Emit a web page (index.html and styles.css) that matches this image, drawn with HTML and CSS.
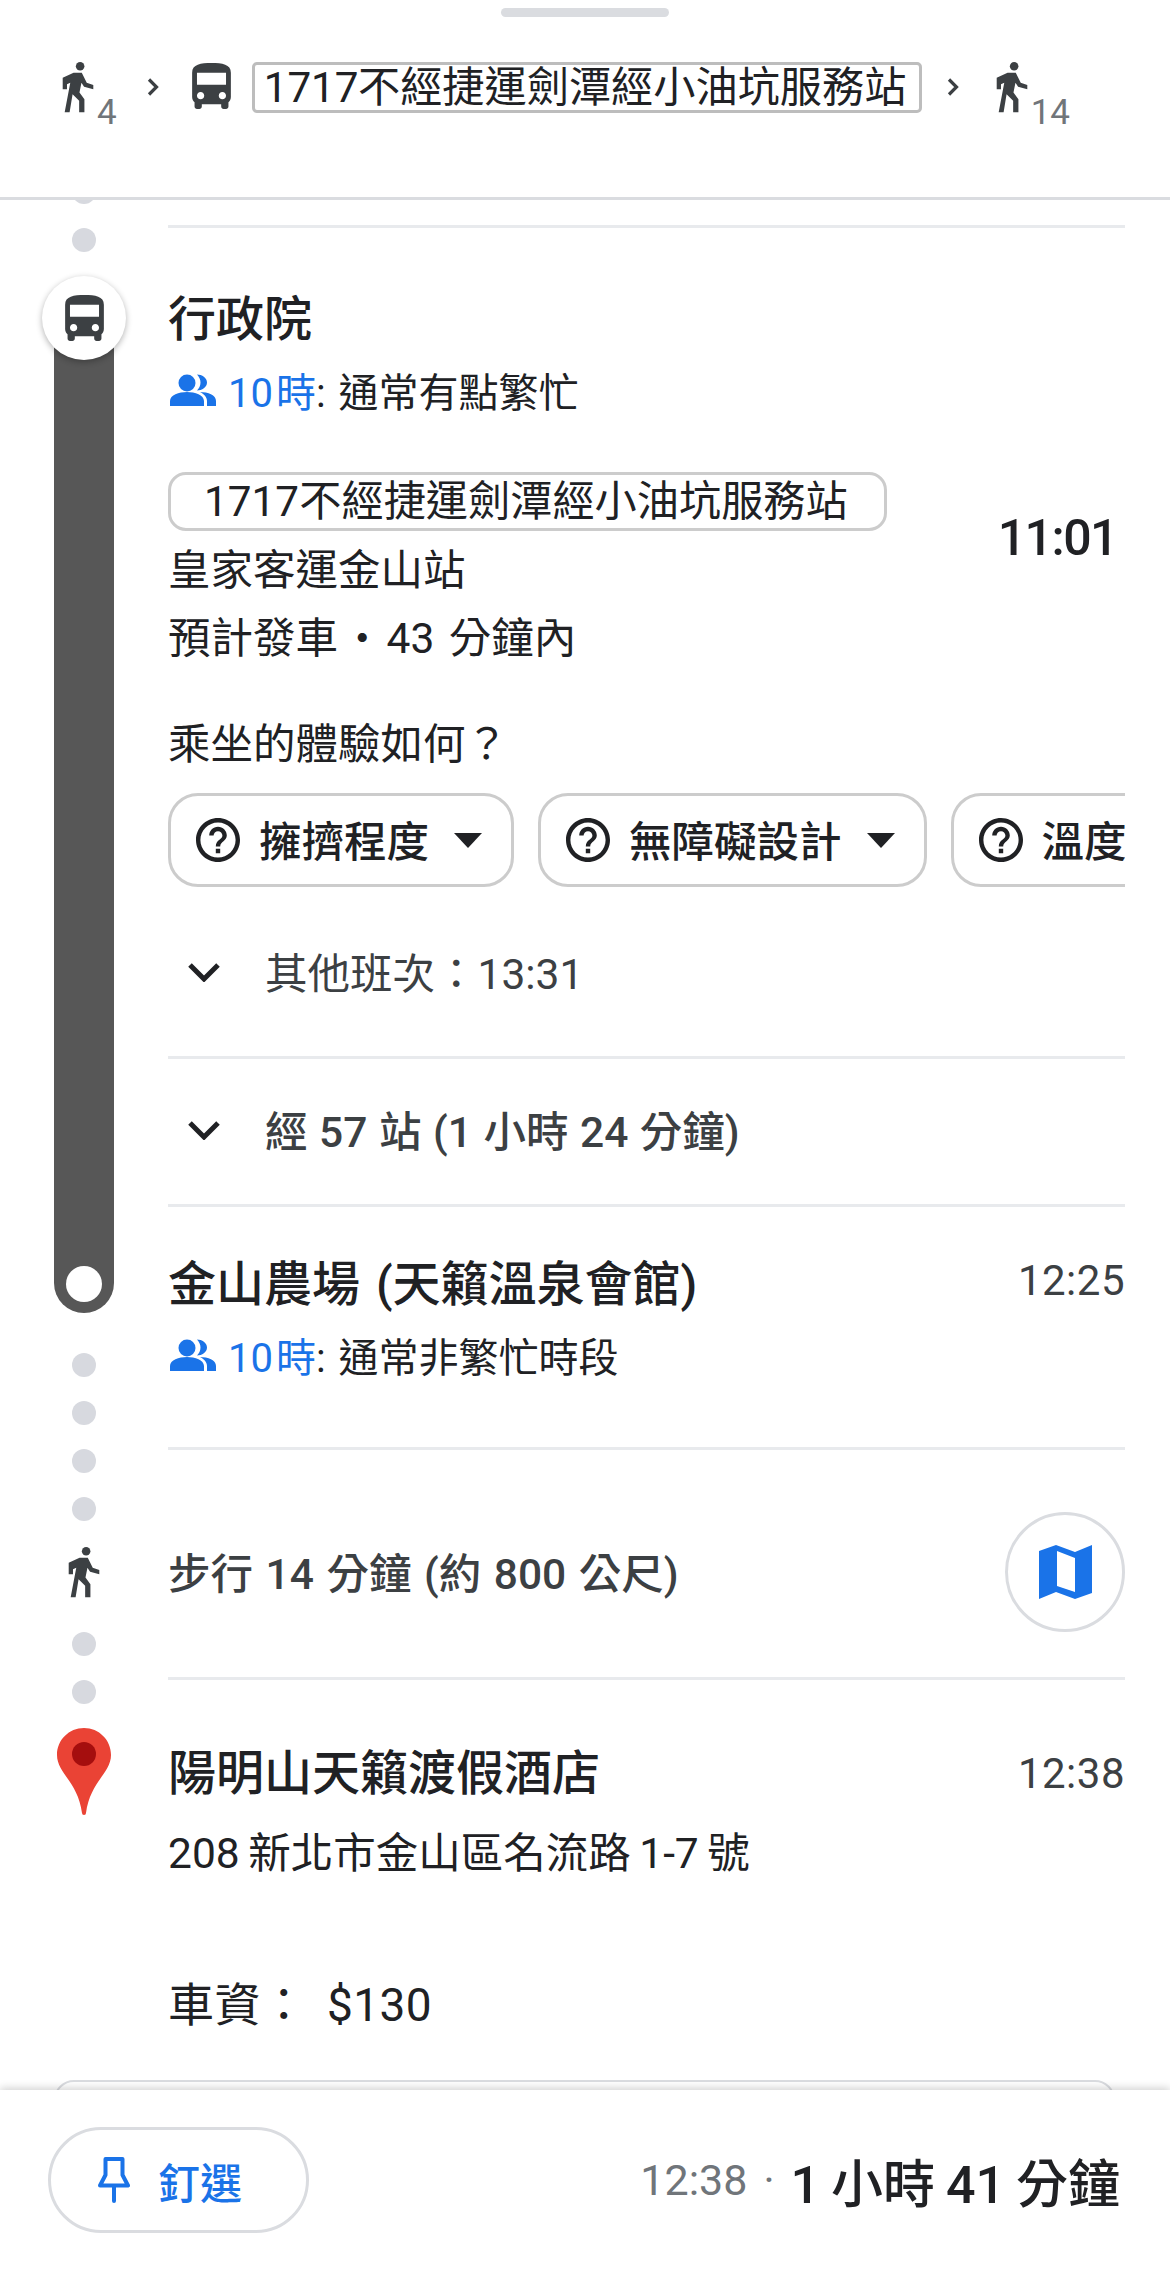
FILE: index.html
```html
<!doctype html>
<html lang="zh-Hant">
  <head>
    <meta charset="utf-8">
    <meta name="viewport" content="width=device-width, user-scalable=no">
    <title>路線詳情</title>
    <link rel="stylesheet" href="styles.css">
  </head>
  <body>
    <svg class="sprites" xmlns="http://www.w3.org/2000/svg">
      <symbol id="walk" viewBox="65 37 97 155"><circle cx="120" cy="50" r="13"/><path d="M67 85L100 70h25l15 30 20 7v13l-28-8-8-12-6 30 15 20v40h-16v-35l-20-20-9 55H73l17-90-10 5v15H67z"/></symbol>
      <symbol id="bus" viewBox="4 2 16 19"><path d="M4 16c0 .88.39 1.67 1 2.22V20c0 .55.45 1 1 1h1c.55 0 1-.45 1-1v-1h8v1c0 .55.45 1 1 1h1c.55 0 1-.45 1-1v-1.78c.61-.55 1-1.34 1-2.22V6c0-3.5-3.58-4-8-4s-8 .5-8 4v10zm3.5 1c-.83 0-1.5-.67-1.5-1.5S6.67 14 7.5 14s1.5.67 1.5 1.5S8.33 17 7.5 17zm9 0c-.83 0-1.5-.67-1.5-1.5s.67-1.5 1.5-1.5 1.5.67 1.5 1.5-.67 1.5-1.5 1.5zm1.5-6H6V6h12v5z"/></symbol>
      <symbol id="people" viewBox="0 0 46 32"><circle cx="17" cy="9" r="8.5"/><path d="M0 32v-5c0-6 9-9 17-9s17 3 17 9v5zM27 .5c5 0 10 3.5 10 8s-5 8-10 8c2-2 3.5-5 3.5-8s-1.5-6-3.5-8zM30 18c8 0 16 3 16 9v5h-9v-5c0-4-3-7-7-9z"/></symbol>
      <symbol id="help" viewBox="2 2 20 20"><path d="M11 18h2v-2h-2v2zm1-16C6.48 2 2 6.48 2 12s4.48 10 10 10 10-4.48 10-10S17.52 2 12 2zm0 18c-4.41 0-8-3.59-8-8s3.59-8 8-8 8 3.59 8 8-3.59 8-8 8zm0-14c-2.21 0-4 1.79-4 4h2c0-1.1.9-2 2-2s2 .9 2 2c0 2-3 1.75-3 5h2c0-2.25 3-2.5 3-5 0-2.21-1.79-4-4-4z"/></symbol>
      <symbol id="chevron-right" viewBox="0 0 13 20"><path d="M3 2.5l7.5 7.5L3 17.500" fill="none" stroke="currentColor" stroke-width="3.2"/></symbol>
      <symbol id="chevron-down" viewBox="0 0 32 20"><path d="M2 3l14 14L30 3" fill="none" stroke="currentColor" stroke-width="5"/></symbol>
    </svg>

    <header class="topbar">
      <div class="handle"></div>
      <div class="steps">
        <svg class="icon walk"><use href="#walk"/></svg>
        <span class="mins">4</span>
        <svg class="chev"><use href="#chevron-right"/></svg>
        <svg class="icon bus"><use href="#bus"/></svg>
        <span class="linebox">1717 不經捷運劍潭經小油坑服務站</span>
        <svg class="chev chev2"><use href="#chevron-right"/></svg>
        <svg class="icon walk walk2"><use href="#walk"/></svg>
        <span class="mins">14</span>
      </div>
    </header>

    <main class="scroll">
      <div class="timeline">
        <div class="rail">
          <div class="dot first"></div>
          <div class="dot"></div>
          <div class="badge"><svg class="icon bus"><use href="#bus"/></svg></div>
          <div class="bar"><div class="barend"></div></div>
          <div class="dot afterbar"></div>
          <div class="dot"></div>
          <div class="dot"></div>
          <div class="dot"></div>
          <svg class="icon railwalk"><use href="#walk"/></svg>
          <div class="dot afterwalk"></div>
          <div class="dot"></div>
          <svg class="destpin" viewBox="0 0 54 87">
            <path d="M27 0C12 0 0 12 0 27c0 18 21 27 25 58a2 2 0 0 0 4 0c4-31 25-40 25-58C54 12 42 0 27 0z" fill="#ea4335"/>
            <ellipse cx="27" cy="26" rx="12" ry="12" fill="#a50e0e"/>
          </svg>
        </div>

        <div class="content">
          <hr class="line firstline">

          <div class="stop">
            <h2 class="name">行政院</h2>
          </div>
          <div class="crowd">
            <svg class="people"><use href="#people"/></svg>
            <span class="hour">10 時</span><span class="crowdtext">: 通常有點繁忙</span>
          </div>

          <div class="depart">
            <div class="departinfo">
              <div class="routechip">1717 不經捷運劍潭經小油坑服務站</div>
              <div class="textline">皇家客運金山站</div>
              <div class="textline eta">預計發車<span class="etadot">・</span>43 分鐘內</div>
            </div>
            <div class="departtime">11:01</div>
          </div>

          <div class="question">乘坐的體驗如何？</div>
          <div class="chips">
            <div class="chip"><svg class="help"><use href="#help"/></svg><span>擁擠程度</span><i class="caret"></i></div>
            <div class="chip"><svg class="help"><use href="#help"/></svg><span>無障礙設計</span><i class="caret"></i></div>
            <div class="chip"><svg class="help"><use href="#help"/></svg><span>溫度</span><i class="caret"></i></div>
          </div>

          <div class="expand other">
            <svg class="down"><use href="#chevron-down"/></svg>
            <span>其他班次：13:31</span>
          </div>
          <hr class="line">
          <div class="expand stops">
            <svg class="down"><use href="#chevron-down"/></svg>
            <span>經 57 站 (1 小時 24 分鐘)</span>
          </div>
          <hr class="line">

          <div class="stop second">
            <h2 class="name">金山農場 (天籟溫泉會館)</h2>
            <span class="clock">12:25</span>
          </div>
          <div class="crowd">
            <svg class="people"><use href="#people"/></svg>
            <span class="hour">10 時</span><span class="crowdtext">: 通常非繁忙時段</span>
          </div>
          <hr class="line beforewalk">

          <div class="walkrow">
            <span class="walktext">步行 14 分鐘 (約 800 公尺)</span>
            <div class="mapbtn">
              <svg class="mapicon" viewBox="0 0 53 54"><path fill-rule="evenodd" d="M0 6L17 0l19 7L53 0v48l-17 6-19-7-17 7zM18 6v35l18 6V13z"/></svg>
            </div>
          </div>
          <hr class="line">

          <div class="stop third">
            <h2 class="name">陽明山天籟渡假酒店</h2>
            <span class="clock">12:38</span>
          </div>
          <div class="textline address">208 新北市金山區名流路 1-7 號</div>
          <div class="fare">車資： $130</div>
        </div>
      </div>
      <div class="nextcard"></div>
    </main>

    <footer class="bottombar">
      <div class="pinbtn">
        <svg class="pin" viewBox="0 0 32 46"><path d="M7.500 2h17v16l5.500 10.500H2L7.500 18zM16 29v15"/></svg>
        <span>釘選</span>
      </div>
      <div class="summary">
        <span class="arrive">12:38</span>
        <span class="sep">·</span>
        <span class="total">1 小時 41 分鐘</span>
      </div>
    </footer>
  </body>
</html>
```

FILE: styles.css
```css
* {
  box-sizing: border-box;
}

body {
  margin: 0;
  width: 1170px;
  height: 2270px;
  overflow: hidden;
  display: flex;
  flex-direction: column;
  background: #fff;
  color: #202124;
  font-family: Roboto, "Noto Sans CJK TC", sans-serif;
  font-size: 42.5px;
}

.sprites {
  display: none;
}

.icon {
  display: block;
  fill: #3c4043;
  flex: none;
}

/* top bar */
.topbar {
  flex: none;
  height: 200px;
  border-bottom: 3px solid #dadce0;
  background: #fff;
  position: relative;
  z-index: 2;
  padding-top: 8px;
}

.handle {
  width: 168px;
  height: 9px;
  margin: 0 auto;
  border-radius: 5px;
  background: #dadce0;
}

.steps {
  display: flex;
  align-items: flex-start;
  margin-top: 45px;
  padding-left: 62px;
}

.walk {
  width: 32px;
  height: 51px;
}

.mins {
  font-size: 35px;
  line-height: 36px;
  color: #70757a;
  margin-top: 33px;
  margin-left: 3px;
}

.chev {
  width: 13px;
  height: 20px;
  margin-top: 15px;
  margin-left: 29px;
  color: #3c4043;
}

.chev2 {
  margin-left: 24px;
}

.bus {
  width: 39px;
  height: 46px;
}

.steps .bus {
  margin-left: 33px;
  margin-top: 1px;
}

.linebox {
  width: 670px;
  height: 51px;
  margin-left: 21px;
  border: 3px solid #bdbdbd;
  border-radius: 5px;
  font-size: 42.2px;
  line-height: 46px;
  padding-left: 9px;
  word-spacing: -11px;
  white-space: nowrap;
}

.walk2 {
  margin-left: 37px;
}

/* scrolling part */
.scroll {
  flex: 1;
  overflow: hidden;
  min-height: 0;
}

.timeline {
  display: flex;
}

.rail {
  flex: none;
  width: 168px;
  display: flex;
  flex-direction: column;
  align-items: center;
}

.dot {
  flex: none;
  width: 24px;
  height: 24px;
  border-radius: 50%;
  background: #d7d9df;
  margin-top: 24px;
}

.dot.first {
  margin-top: -20px;
}

.dot.afterbar {
  margin-top: 40px;
}

.dot.afterwalk {
  margin-top: 34px;
}

.badge {
  flex: none;
  position: relative;
  z-index: 1;
  width: 84px;
  height: 84px;
  margin-top: 24px;
  border-radius: 50%;
  background: #fff;
  box-shadow: 0 2px 6px rgba(0, 0, 0, .3);
  display: flex;
  align-items: center;
  justify-content: center;
}

.bar {
  flex: none;
  width: 60px;
  height: 995px;
  margin-top: -42px;
  border-radius: 0 0 30px 30px;
  background: #575757;
  display: flex;
  flex-direction: column;
  justify-content: flex-end;
  align-items: center;
  padding-bottom: 11px;
}

.barend {
  width: 36px;
  height: 36px;
  border-radius: 50%;
  background: #fff;
}

.railwalk {
  width: 32px;
  height: 51px;
  margin-top: 26px;
}

.destpin {
  flex: none;
  width: 54px;
  height: 87px;
  margin-top: 24px;
}

.content {
  flex: none;
  width: 957px;
  display: flex;
  flex-direction: column;
}

.line {
  flex: none;
  width: 100%;
  height: 3px;
  margin: 0;
  border: 0;
  background: #e8eaed;
}

.firstline {
  margin-top: 25px;
}

.stop {
  display: flex;
  justify-content: space-between;
  align-items: center;
  margin-top: 62px;
  height: 60px;
}

.stop.second {
  margin-top: 48px;
}

.stop.second .name {
  word-spacing: 4px;
}

.stop.second .clock {
  margin-bottom: 8px;
}

.stop.third {
  margin-top: 64px;
}

.name {
  margin: 0;
  font-size: 48px;
  font-weight: 500;
  line-height: 60px;
}

.clock {
  color: #3c4043;
  font-size: 42px;
  line-height: 50px;
  letter-spacing: .5px;
}

.crowd {
  display: flex;
  align-items: center;
  height: 50px;
  margin-top: 15px;
  font-size: 40px;
  white-space: pre;
}

.people {
  width: 46px;
  height: 32px;
  margin-left: 2px;
  margin-right: 12px;
  fill: #1a73e8;
}

.hour {
  color: #1a73e8;
  word-spacing: -7px;
}

.crowdtext {
  word-spacing: 3px;
}

.depart {
  display: flex;
  justify-content: space-between;
  margin-top: 57px;
}

.routechip {
  width: 719px;
  height: 59px;
  margin-bottom: 6px;
  border: 3px solid #ccc;
  border-radius: 18px;
  font-size: 42.2px;
  line-height: 53px;
  padding-left: 33px;
  word-spacing: -10px;
  white-space: nowrap;
}

.textline {
  height: 68px;
  line-height: 68px;
}

.eta {
  word-spacing: 4px;
}

.etadot {
  margin: 0 3px;
}

.departtime {
  font-size: 50px;
  font-weight: 500;
  line-height: 66px;
  letter-spacing: -1.5px;
  margin-top: 33px;
  margin-right: 8px;
}

.question {
  height: 60px;
  line-height: 60px;
  margin-top: 42px;
}

.chips {
  display: flex;
  gap: 24px;
  margin-top: 18px;
  overflow: hidden;
}

.chip {
  flex: none;
  display: flex;
  align-items: center;
  height: 94px;
  border: 3px solid #ccc;
  border-radius: 30px;
  padding: 0 29px 0 25px;
  font-weight: 500;
}

.chip span {
  margin-bottom: 4px;
}

.help {
  width: 44px;
  height: 44px;
  margin-right: 19px;
  fill: #202124;
}

.caret {
  width: 0;
  height: 0;
  margin-left: 25px;
  border-left: 14px solid transparent;
  border-right: 14px solid transparent;
  border-top: 15px solid #202124;
}

.expand {
  display: flex;
  align-items: center;
  height: 80px;
  padding-left: 20px;
  color: #3c4043;
}

.expand span {
  margin-bottom: 4px;
}

.expand.other {
  margin-top: 45px;
  margin-bottom: 44px;
}

.expand.stops {
  margin-top: 31px;
  margin-bottom: 34px;
  font-weight: 500;
  word-spacing: 1px;
}

.down {
  width: 32px;
  height: 20px;
  margin-right: 45px;
  color: #202124;
}

.beforewalk {
  margin-top: 67px;
}

.walkrow {
  display: flex;
  justify-content: space-between;
  align-items: center;
  margin-top: 62px;
  margin-bottom: 45px;
  font-weight: 500;
  color: #3c4043;
  word-spacing: 2px;
}

.walktext {
  margin-bottom: 4px;
}

.mapbtn {
  width: 120px;
  height: 120px;
  border: 3px solid #dadce0;
  border-radius: 50%;
  display: flex;
  align-items: center;
  justify-content: center;
}

.mapicon {
  width: 53px;
  height: 54px;
  fill: #1a73e8;
}

.address {
  margin-top: 18px;
  height: 64px;
  line-height: 64px;
  word-spacing: -2px;
}

.fare {
  margin-top: 87px;
  font-size: 46px;
  line-height: 64px;
  word-spacing: 8px;
  letter-spacing: .4px;
}

.nextcard {
  width: 1061px;
  height: 60px;
  margin-left: 54px;
  margin-top: 43px;
  border: 2px solid #dadce0;
  border-radius: 20px;
}

/* bottom bar */
.bottombar {
  flex: none;
  height: 180px;
  position: relative;
  z-index: 2;
  display: flex;
  align-items: center;
  justify-content: space-between;
  padding: 0 50px 0 48px;
  background: #fff;
  box-shadow: 0 -2px 8px rgba(0, 0, 0, .18);
}

.pinbtn {
  display: flex;
  align-items: center;
  width: 261px;
  height: 106px;
  padding-left: 47px;
  border: 3px solid #dadce0;
  border-radius: 53px;
  color: #1a73e8;
  font-size: 42px;
  font-weight: 500;
}

.pin {
  width: 32px;
  height: 46px;
  margin-right: 28px;
  fill: none;
  stroke: #1a73e8;
  stroke-width: 4;
  stroke-linejoin: round;
  stroke-linecap: round;
}

.summary {
  display: flex;
  align-items: center;
}

.arrive {
  color: #70757a;
  font-size: 43px;
}

.sep {
  color: #70757a;
  margin: 0 16px;
}

.total {
  font-size: 52px;
  font-weight: 500;
  word-spacing: -2px;
}
```
